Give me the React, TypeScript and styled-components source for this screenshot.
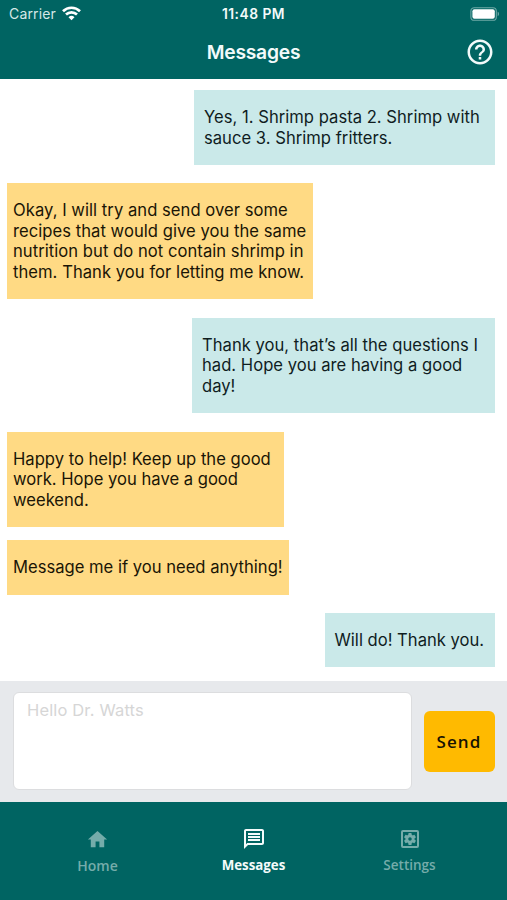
import React from "react";
import styled, { createGlobalStyle } from "styled-components";
import {
  MdHelpOutline,
  MdHome,
  MdOutlineMessage,
  MdOutlineSettingsApplications,
} from "react-icons/md";

const teal = "#006462";

const GlobalStyle = createGlobalStyle`
  * { box-sizing: border-box; }
  body { margin: 0; background: #fff; font-family: Inter, "Liberation Sans", sans-serif; }
`;

const Screen = styled.div`
  display: flex;
  flex-direction: column;
  width: 507px;
  height: 900px;
  overflow: hidden;
  background: #fff;
`;

const Header = styled.header`
  height: 79px;
  flex: none;
  background: ${teal};
  color: #f2fafa;
`;

const StatusBar = styled.div`
  display: grid;
  grid-template-columns: 1fr auto 1fr;
  align-items: center;
  height: 27px;
  padding: 0 7px 0 9px;
`;

const Carrier = styled.div`
  display: flex;
  align-items: center;
  gap: 6px;
  font-size: 14px;
  letter-spacing: 0.15px;
  color: #d5e8e7;
`;

const Clock = styled.div`
  margin-right: 2px;
  font-size: 13.8px;
  font-weight: 600;
  letter-spacing: 0.5px;
`;

const BatterySlot = styled.div`
  display: flex;
  justify-content: flex-end;
`;

const TitleBar = styled.div`
  display: grid;
  grid-template-columns: 1fr auto 1fr;
  align-items: center;
  height: 50px;
  padding: 0 12px;
`;

const Title = styled.h1`
  grid-column: 2;
  margin: 0;
  font-size: 19.3px;
  font-weight: 600;
  letter-spacing: -0.25px;
`;

const HelpButton = styled.button`
  display: flex;
  justify-self: end;
  padding: 0;
  border: 0;
  background: none;
  color: inherit;
`;

const Thread = styled.main`
  display: flex;
  flex-direction: column;
  height: 602px;
  flex: none;
  padding: 11px 12.5px 0 7px;
`;

const Bubble = styled.p<{ $mine?: boolean; $width: number; $gap: number; $spacing: number }>`
  align-self: ${(p) => (p.$mine ? "flex-end" : "flex-start")};
  width: ${(p) => p.$width}px;
  margin: 0 0 ${(p) => p.$gap}px;
  padding: 17px 0 17px ${(p) => (p.$mine ? 10 : 6)}px;
  background: ${(p) => (p.$mine ? "#cae9e9" : "#ffda84")};
  color: ${(p) => (p.$mine ? "#101d1f" : "#1a1506")};
  font-size: 16.6px;
  line-height: 20.5px;
  letter-spacing: ${(p) => p.$spacing}px;
  white-space: pre;
`;

const Composer = styled.form`
  display: flex;
  align-items: center;
  gap: 12px;
  height: 121px;
  flex: none;
  padding: 0 12.5px 1px 13px;
  background: #e7e9ec;
`;

const Input = styled.textarea`
  flex: 1;
  height: 98px;
  padding: 7px 13px;
  border: 1px solid #dcdddf;
  border-radius: 6px;
  outline: 0;
  resize: none;
  background: #fff;
  font: 16.5px/20px Inter, "Liberation Sans", sans-serif;
  letter-spacing: 0.15px;
  &::placeholder { color: #d6d6d6; opacity: 1; }
`;

const SendButton = styled.button`
  width: 71px;
  height: 61px;
  padding: 0;
  border: 0;
  border-radius: 6px;
  background: #ffba00;
  color: #171203;
  font: 600 17px/1 "Open Sans", sans-serif;
  letter-spacing: 1.1px;
`;

const TabBar = styled.nav`
  display: grid;
  grid-template-columns: repeat(3, 156px);
  justify-content: center;
  height: 98px;
  flex: none;
  background: ${teal};
`;

const Tab = styled.a<{ $active?: boolean; $drop?: number }>`
  display: flex;
  flex-direction: column;
  align-items: center;
  gap: 5px;
  padding-top: ${(p) => 25 + (p.$drop ?? 0)}px;
  color: ${(p) => (p.$active ? "#f4fbfb" : "#75acaa")};
  font: 600 13.5px/18px "Open Sans", sans-serif;
  ${(p) => p.$active && "font-weight: 700; font-size: 13.3px;"}
`;

const HomeTab = styled(Tab)`
  gap: 6px;
  font-size: 14px;
`;

const WifiIcon = () => (
  <svg width="19" height="15" viewBox="0 0 19 15" fill="none" stroke="#fff" strokeWidth="2.7">
    <path d="M1 5.2a12.2 12.2 0 0 1 17 0" />
    <path d="M4 8.5a8 8 0 0 1 11 0" />
    <path d="M6.5 11.2a4.4 4.4 0 0 1 6 0L9.5 14.3z" fill="#fff" stroke="none" />
  </svg>
);

const BatteryIcon = () => (
  <svg width="30" height="14" viewBox="0 0 30 14">
    <rect x="0.9" y="0.7" width="25.4" height="12.6" rx="3.4" fill="none" stroke="#6fa9a7" strokeWidth="1.1" />
    <rect x="2.4" y="2.2" width="22.4" height="9.6" rx="2" fill="#fff" />
    <path d="M27.7 4.8c1.7.6 1.7 3.8 0 4.4z" fill="#6fa9a7" />
  </svg>
);

const messages = [
  { mine: true, width: 300.5, gap: 18, spacing: 0.02, text: "Yes, 1. Shrimp pasta 2. Shrimp with\nsauce 3. Shrimp fritters." },
  { mine: false, width: 305.5, gap: 18.5, spacing: 0.04, text: "Okay, I will try and send over some\nrecipes that would give you the same\nnutrition but do not contain shrimp in\nthem. Thank you for letting me know." },
  { mine: true, width: 302.5, gap: 18.5, spacing: 0.02, text: "Thank you, that’s all the questions I\nhad. Hope you are having a good\nday!" },
  { mine: false, width: 277, gap: 13, spacing: 0, text: "Happy to help! Keep up the good\nwork. Hope you have a good\nweekend." },
  { mine: false, width: 282, gap: 18, spacing: 0, text: "Message me if you need anything!" },
  { mine: true, width: 170, gap: 0, spacing: 0, text: "Will do! Thank you." },
];

export default function App() {
  return (
    <>
      <GlobalStyle />
      <Screen>
        <Header>
          <StatusBar>
            <Carrier>
              Carrier
              <WifiIcon />
            </Carrier>
            <Clock>11:48 PM</Clock>
            <BatterySlot>
              <BatteryIcon />
            </BatterySlot>
          </StatusBar>
          <TitleBar>
            <Title>Messages</Title>
            <HelpButton aria-label="Help">
              <MdHelpOutline size={30} />
            </HelpButton>
          </TitleBar>
        </Header>
        <Thread>
          {messages.map((m) => (
            <Bubble key={m.text} $mine={m.mine} $width={m.width} $gap={m.gap} $spacing={m.spacing}>
              {m.text}
            </Bubble>
          ))}
        </Thread>
        <Composer>
          <Input placeholder="Hello Dr. Watts" />
          <SendButton type="button">Send</SendButton>
        </Composer>
        <TabBar>
          <HomeTab $drop={1}>
            <MdHome size={23} />
            Home
          </HomeTab>
          <Tab $active>
            <MdOutlineMessage size={24} />
            Messages
          </Tab>
          <Tab>
            <MdOutlineSettingsApplications size={24} />
            Settings
          </Tab>
        </TabBar>
      </Screen>
    </>
  );
}
